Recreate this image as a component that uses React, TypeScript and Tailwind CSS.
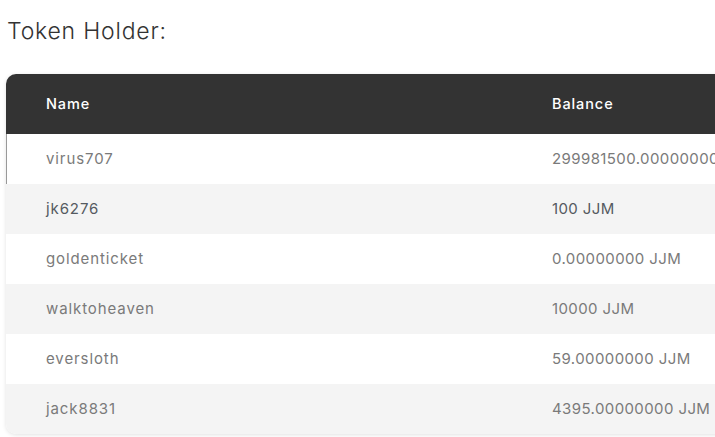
import React from "react";

const rows = [
  { name: "virus707", balance: "299981500.00000000 JJM" },
  { name: "jk6276", balance: "100 JJM", dark: true },
  { name: "goldenticket", balance: "0.00000000 JJM" },
  { name: "walktoheaven", balance: "10000 JJM" },
  { name: "eversloth", balance: "59.00000000 JJM" },
  { name: "jack8831", balance: "4395.00000000 JJM" },
];

export default function App() {
  return (
    <div
      className="w-[715px] h-[437px] overflow-hidden bg-white"
      style={{ fontFamily: 'Inter, "Open Sans", "Liberation Sans", sans-serif' }}
    >
      <h2 className="pl-[7px] pt-[15px] text-[23px] leading-[32px] font-light tracking-[0.8px] text-[#333]">
        Token Holder:
      </h2>
      <div className="ml-[6px] mt-[27px] w-[1000px] rounded-[10px] overflow-hidden shadow-[0_1px_4px_rgba(0,0,0,0.12)]">
        <div className="flex h-[60px] items-center bg-[#333333] text-[14.5px] font-medium tracking-[0.9px] text-white">
          <div className="w-[546px] pl-[40px]">Name</div>
          <div>Balance</div>
        </div>
        {rows.map((r, i) => (
          <div
            key={r.name}
            className={
              "flex h-[50px] items-center text-[15px] tracking-[0.4px] " +
              (i % 2 === 1 ? "bg-[#f4f4f4] " : "bg-white ") +
              (r.dark ? "text-[#555a60] " : "text-[#7a7a7a] ") +
              (i === 0 ? "border-l border-[#999]" : "")
            }
          >
            <div className={i === 0 ? "w-[545px] pl-[39px] tracking-[0.9px]" : "w-[546px] pl-[40px] tracking-[0.9px]"}>{r.name}</div>
            <div className="whitespace-nowrap">{r.balance}</div>
          </div>
        ))}
      </div>
    </div>
  );
}
